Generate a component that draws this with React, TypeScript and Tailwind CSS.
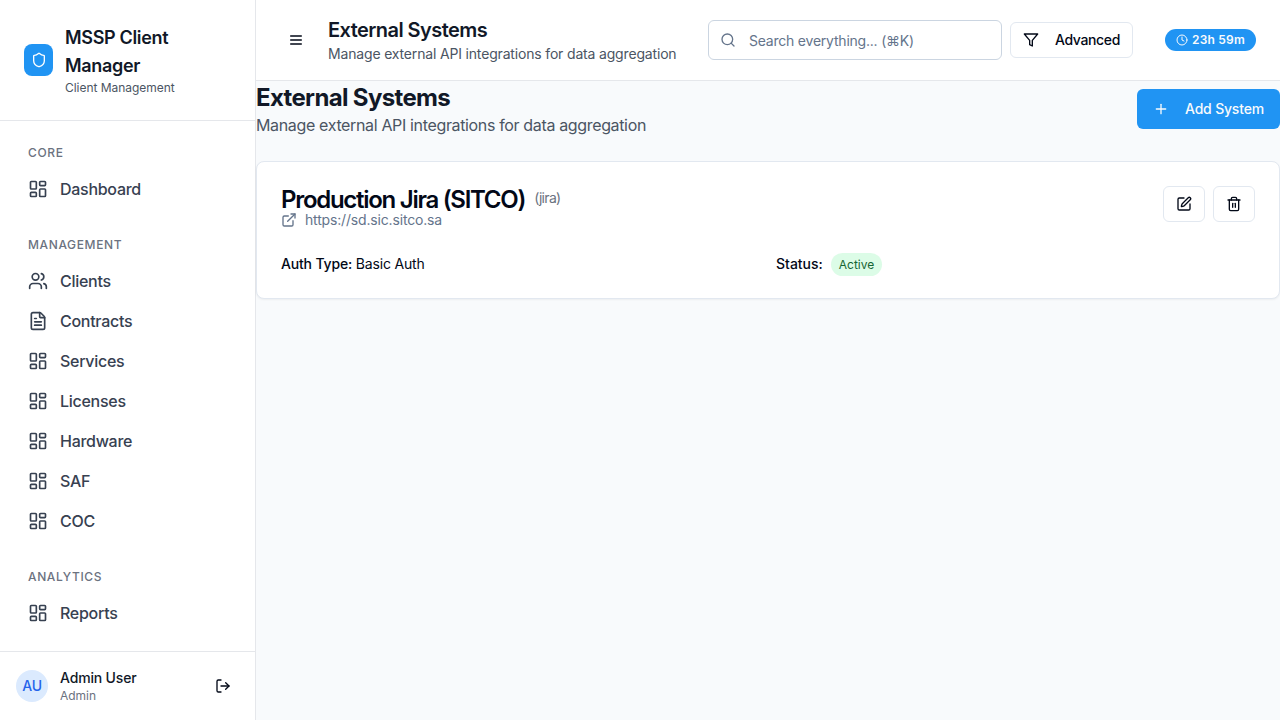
import type { ReactNode } from "react";
import {
  Clock,
  ExternalLink,
  FileText,
  LayoutDashboard,
  LogOut,
  Plus,
  Search,
  Shield,
  SquarePen,
  Trash2,
  Users,
  type LucideIcon,
} from "lucide-react";
import { FiFilter } from "react-icons/fi";

type NavItem = { label: string; icon: LucideIcon };
type NavGroup = { title: string; items: NavItem[] };

const groups: NavGroup[] = [
  { title: "CORE", items: [{ label: "Dashboard", icon: LayoutDashboard }] },
  {
    title: "MANAGEMENT",
    items: [
      { label: "Clients", icon: Users },
      { label: "Contracts", icon: FileText },
      { label: "Services", icon: LayoutDashboard },
      { label: "Licenses", icon: LayoutDashboard },
      { label: "Hardware", icon: LayoutDashboard },
      { label: "SAF", icon: LayoutDashboard },
      { label: "COC", icon: LayoutDashboard },
    ],
  },
  { title: "ANALYTICS", items: [{ label: "Reports", icon: LayoutDashboard }] },
];

function MenuIcon() {
  return (
    <svg className="h-4 w-4" viewBox="0 0 24 24" fill="none" stroke="currentColor" strokeWidth="2" strokeLinecap="round">
      <path d="M4 6h16M4 12h16M4 18h16" />
    </svg>
  );
}

function Sidebar() {
  return (
    <aside className="flex w-64 shrink-0 flex-col border-r border-[#e5e7eb] bg-white">
      <div className="flex items-center gap-3 border-b border-[#e5e7eb] p-6">
        <div className="flex h-8 w-[29px] shrink-0 items-center justify-center rounded-lg bg-[#2094f3]">
          <Shield className="h-4 w-4 text-white" />
        </div>
        <div className="min-w-0 flex-1">
          <h1 className="text-lg leading-7 font-semibold tracking-[-0.33px] text-[#111827]">MSSP Client Manager</h1>
          <p className="text-xs tracking-[-0.03px] text-[#4b5563]">Client Management</p>
        </div>
      </div>
      <nav className="flex min-h-0 flex-1 flex-col gap-7 overflow-hidden px-4 py-6">
        {groups.map((group) => (
          <div key={group.title}>
            <h3 className="mb-2 px-3 text-xs font-medium tracking-[0.63px] text-[#6b7280]">{group.title}</h3>
            {group.items.map(({ label, icon: Icon }) => (
              <a
                key={label}
                className="flex h-10 items-center gap-3 px-3 font-medium tracking-[-0.28px] text-[#374151]"
              >
                <Icon className="h-5 w-5" />
                {label}
              </a>
            ))}
          </div>
        ))}
      </nav>
      <div className="flex items-center gap-3 border-t border-[#e5e7eb] p-4">
        <div className="flex h-8 w-8 items-center justify-center rounded-full bg-[#dbeafe] text-sm font-medium tracking-[-0.17px] text-[#2563eb]">
          AU
        </div>
        <div className="flex-1">
          <p className="text-sm font-medium tracking-[-0.17px] text-[#111827]">Admin User</p>
          <p className="text-xs tracking-[-0.03px] text-[#6b7280]">Admin</p>
        </div>
        <button className="px-2 text-[#020817]">
          <LogOut className="h-4 w-4" />
        </button>
      </div>
    </aside>
  );
}

function Header() {
  return (
    <header className="flex h-[81px] shrink-0 items-center border-b border-[#e5e7eb] bg-white px-6">
      <button className="mr-4 px-2 text-[#020817]">
        <MenuIcon />
      </button>
      <div>
        <h2 className="text-xl leading-7 font-semibold tracking-[-0.56px] text-[#111827]">External Systems</h2>
        <p className="text-sm tracking-[-0.17px] whitespace-nowrap text-[#4b5563]">
          Manage external API integrations for data aggregation
        </p>
      </div>
      <div className="ml-auto flex items-center">
        <div className="flex h-10 w-[294px] items-center gap-[13px] rounded-md border border-[#cbd5e1] bg-white px-[11px] text-[#64748b]">
          <Search className="h-4 w-4" />
          <span className="pt-0.5 text-sm tracking-[-0.22px]">Search everything... (⌘K)</span>
        </div>
        <button className="ml-2 flex h-9 w-[123px] items-center gap-4 rounded-md border border-[#e2e8f0] px-3 text-sm font-medium tracking-[-0.36px] whitespace-nowrap text-[#020817]">
          <FiFilter className="h-4 w-4 shrink-0" />
          Advanced
        </button>
        <div className="ml-8 flex h-[22px] w-[91px] items-center gap-1 rounded-full bg-[#2094f3] px-[11px] text-xs font-semibold tracking-[0.2px] whitespace-nowrap text-[#f8fafc]">
          <Clock className="h-3 w-3 shrink-0" />
          23h 59m
        </div>
      </div>
    </header>
  );
}

function IconButton({ children }: { children: ReactNode }) {
  return (
    <button className="flex h-9 w-[42px] items-center justify-center rounded-md border border-[#e2e8f0] bg-white">
      {children}
    </button>
  );
}

function SystemCard() {
  return (
    <section className="flex flex-col gap-6 rounded-lg border border-[#e2e8f0] bg-white p-6 text-[#020817] shadow-[0_1px_2px_0_rgb(0_0_0/0.05)]">
      <div className="flex h-11 items-start justify-between">
        <div>
          <h3 className="flex h-6 items-center gap-[9px] text-2xl leading-none font-semibold tracking-[-1.28px]">
            <span className="pt-[3px]">Production Jira (SITCO)</span>
            <span className="text-sm font-normal tracking-[-0.7px] text-[#6b7280]">(jira)</span>
          </h3>
          <p className="flex items-center gap-2 text-sm tracking-[-0.17px] text-[#64748b]">
            <ExternalLink className="h-4 w-4" />
            https://sd.sic.sitco.sa
          </p>
        </div>
        <div className="flex gap-2">
          <IconButton>
            <SquarePen className="h-4 w-4" />
          </IconButton>
          <IconButton>
            <Trash2 className="h-4 w-4" />
          </IconButton>
        </div>
      </div>
      <div className="grid grid-cols-2 grid-rows-[20px] items-center gap-4 text-sm tracking-[-0.17px]">
        <div>
          <span className="font-medium">Auth Type:</span> Basic Auth
        </div>
        <div className="flex items-center gap-2">
          <span className="font-medium tracking-normal">Status:</span>
          <span className="rounded-full bg-[#dcfce7] px-2 pt-1 pb-[3px] text-xs tracking-normal text-[#166534]">
            Active
          </span>
        </div>
      </div>
    </section>
  );
}

export default function App() {
  return (
    <div className="flex h-screen w-full overflow-hidden bg-[#f9fafb] font-['Inter',sans-serif] antialiased">
      <Sidebar />
      <div className="flex min-w-0 flex-1 flex-col">
        <Header />
        <main className="flex flex-1 flex-col gap-6 bg-[#f8fafc]">
          <div className="flex items-center justify-between">
            <div>
              <h1 className="h-8 pt-px text-2xl leading-8 font-bold tracking-[-0.65px] text-[#111827]">
                External Systems
              </h1>
              <p className="tracking-[-0.35px] text-[#4b5563]">Manage external API integrations for data aggregation</p>
            </div>
            <button className="flex h-10 w-[143px] items-center gap-4 rounded-md bg-[#2094f3] px-4 text-sm font-medium tracking-[-0.18px] whitespace-nowrap text-[#f8fafc]">
              <Plus className="h-4 w-4 shrink-0" />
              Add System
            </button>
          </div>
          <SystemCard />
        </main>
      </div>
    </div>
  );
}
